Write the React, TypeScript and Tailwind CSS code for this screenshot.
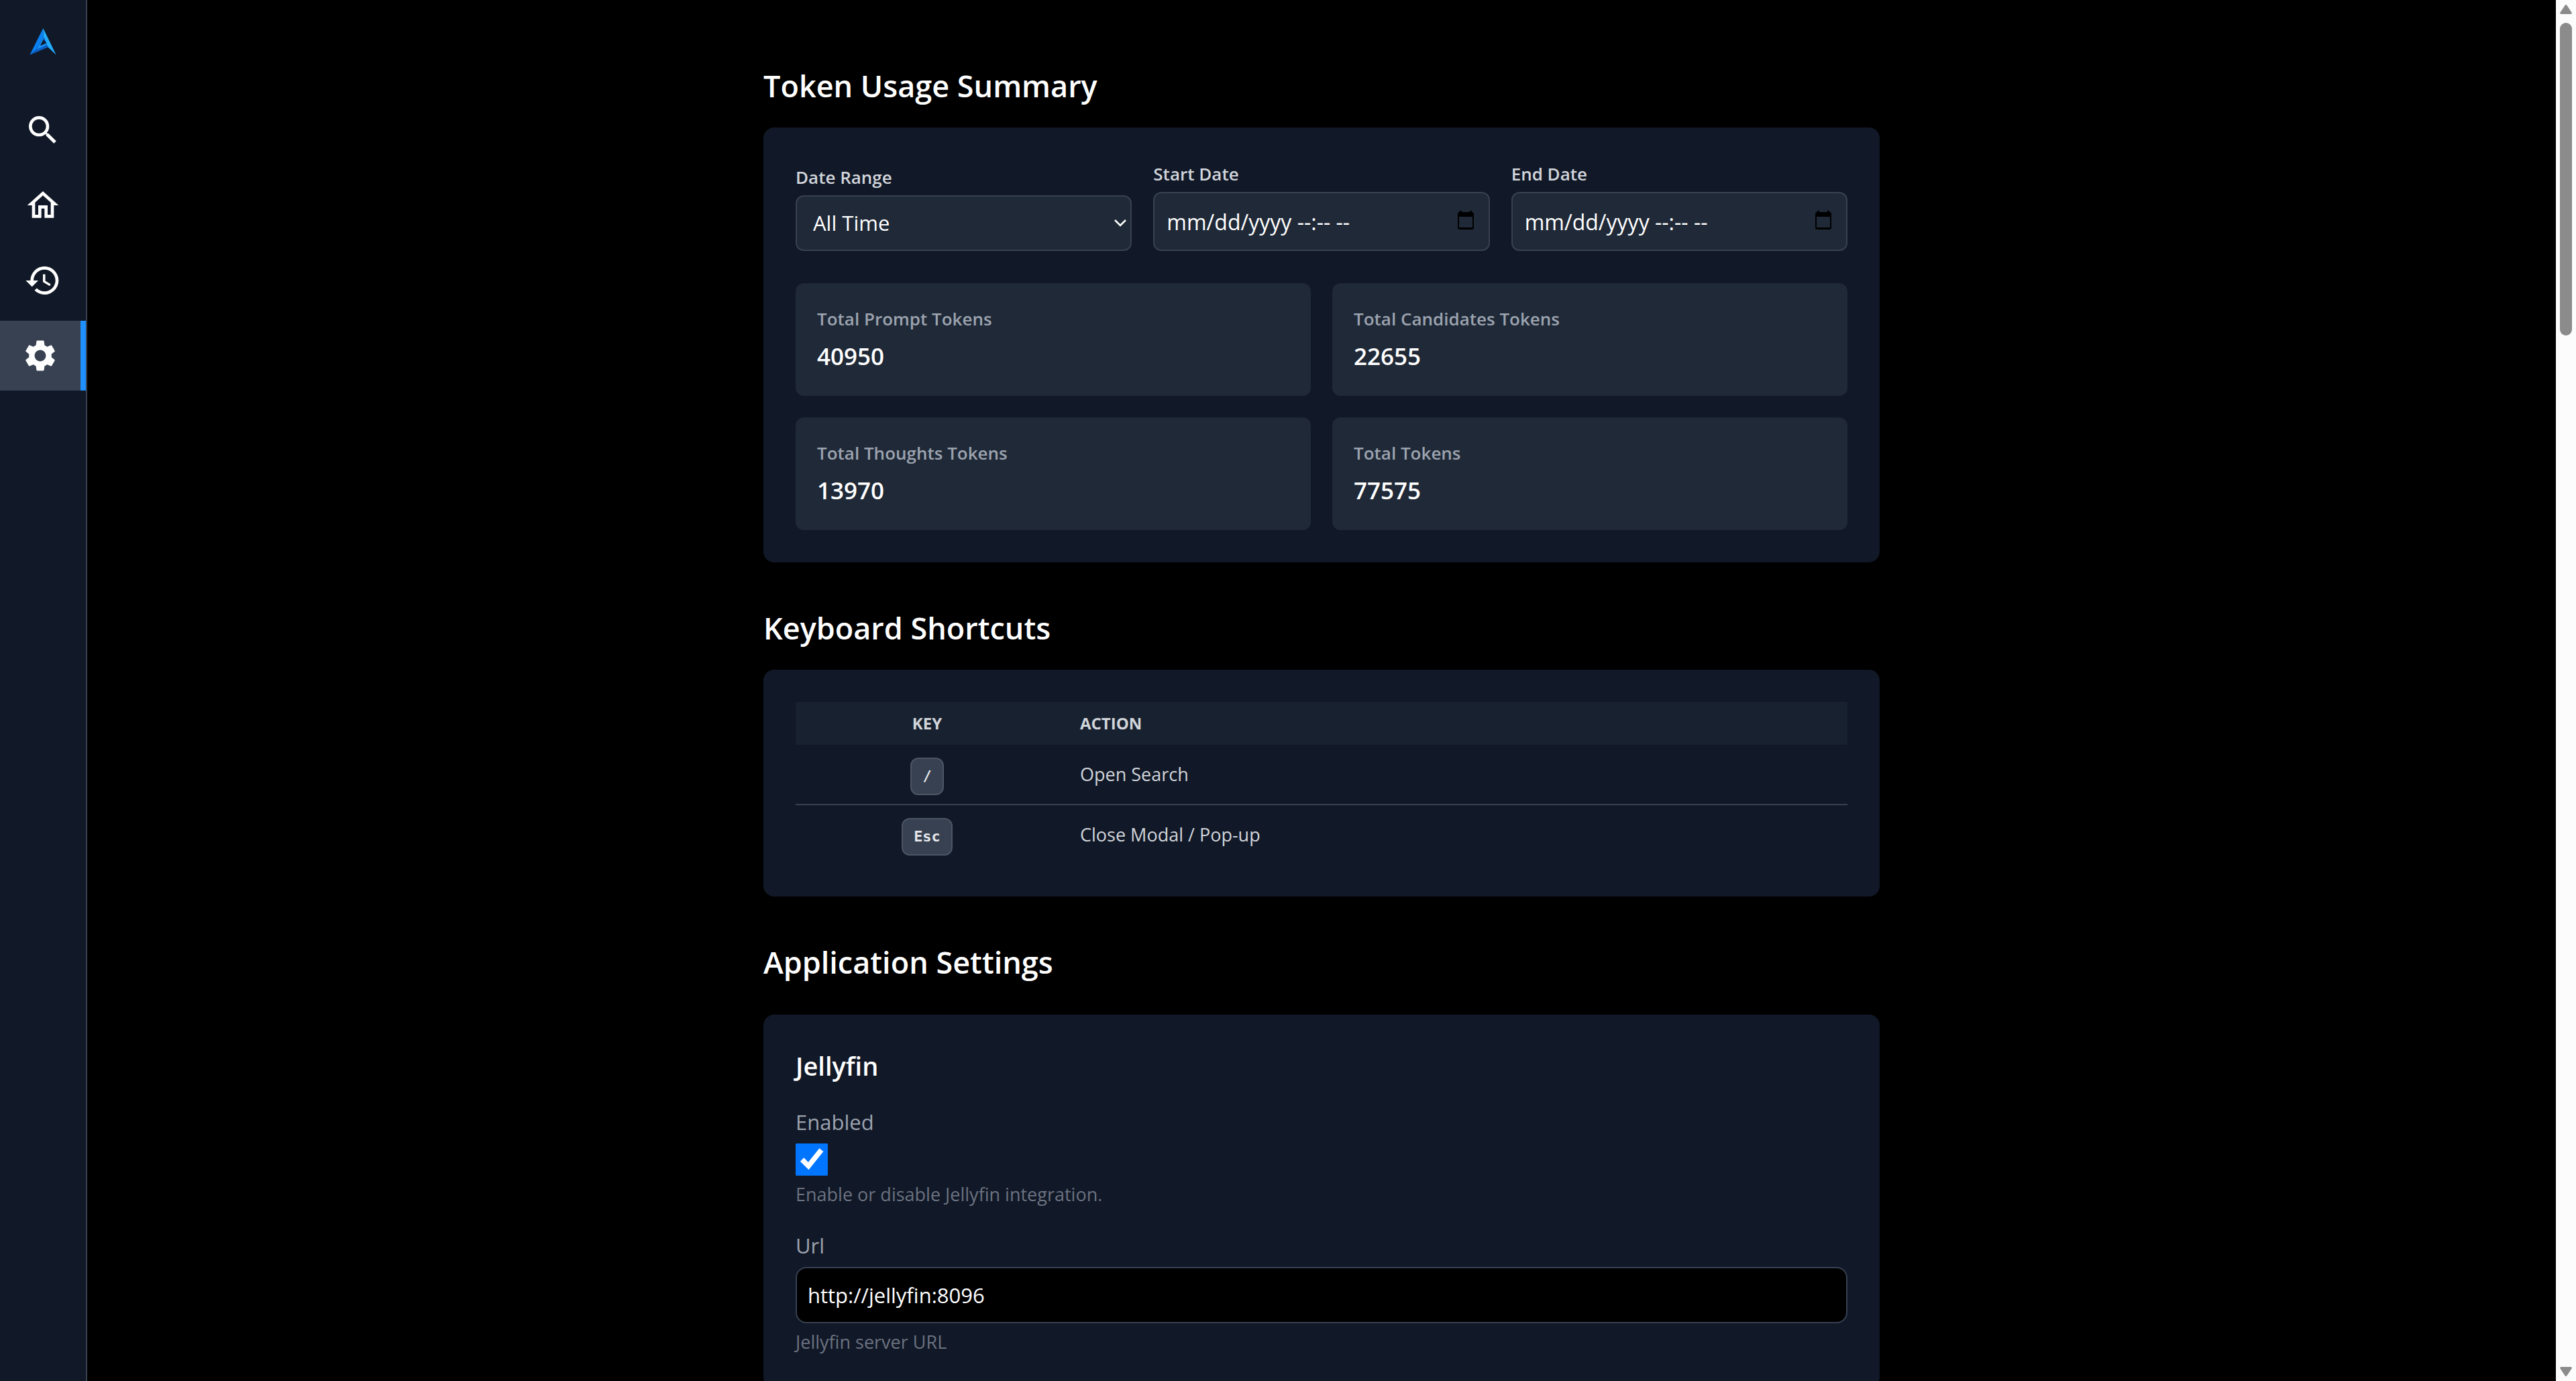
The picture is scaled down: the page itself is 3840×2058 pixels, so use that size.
import type { ReactNode } from "react";
import { MdHistory, MdOutlineHome, MdSearch, MdSettings } from "react-icons/md";

function Logo() {
  return (
    <svg viewBox="0 0 120 122" className="size-10" aria-hidden="true">
      <path d="M61 0 0 122 30 97 62 38Z" fill="#0a80f2" />
      <path d="M61 0 120 121 80 83 75 64 62 38Z" fill="#22acfc" />
      <path d="M62 38 30 98 48 92 78 76 76 68 48 79 62 51 74 66 76 62Z" fill="#1590f8" />
      <path d="M62 38 75 64 78 70 62 52Z" fill="#0757b8" />
      <path d="M0 122 30 97 80 76 84 86Z" fill="#0a5fc4" />
      <path d="M48 79 63 51 73 68Z" fill="#111827" />
    </svg>
  );
}

function NavLink({ label, active = false, children }: { label: string; active?: boolean; children: ReactNode }) {
  return (
    <a
      href="#"
      aria-label={label}
      aria-current={active ? "page" : undefined}
      className={
        active
          ? "flex h-[104px] items-center justify-center border-r-8 border-[#1e90ff] bg-[#374151]"
          : "flex h-[104px] items-center justify-center"
      }
    >
      {children}
    </a>
  );
}

function Sidebar() {
  return (
    <aside className="flex w-[130px] shrink-0 flex-col border-r-2 border-[#374151] bg-[#111827] pt-[42px] text-white">
      <a href="#" aria-label="Start page" className="mb-15 flex justify-center">
        <Logo />
      </a>
      <nav className="flex flex-col gap-2">
        <NavLink label="Search">
          <MdSearch className="size-14" />
        </NavLink>
        <NavLink label="Home">
          <MdOutlineHome className="size-14" />
        </NavLink>
        <NavLink label="History">
          <MdHistory className="size-14" />
        </NavLink>
        <NavLink label="Settings" active>
          <MdSettings className="size-14" />
        </NavLink>
      </nav>
    </aside>
  );
}

function Section({ title, wide = false, children }: { title: string; wide?: boolean; children: ReactNode }) {
  return (
    <section>
      <h2
        className={
          wide
            ? "mb-11 text-[45px] leading-[68px] font-semibold"
            : "mb-7 text-[45px] leading-[68px] font-semibold"
        }
      >
        {title}
      </h2>
      <div className="rounded-2xl bg-[#111827] p-12">{children}</div>
    </section>
  );
}

function DateField({ id, label }: { id: string; label: string }) {
  return (
    <div className="flex flex-col">
      <label htmlFor={id} className="mb-1.5 text-[26px] leading-[42px] font-semibold text-[#d1d5db]">
        {label}
      </label>
      <div className="relative">
        <input
          id={id}
          type="text"
          defaultValue="mm/dd/yyyy --:-- --"
          className="h-[88px] w-full rounded-xl border-2 border-[#374151] bg-[#1f2937] pr-20 pl-[18px] text-[32px] text-white"
        />
        <button type="button" aria-label={`Pick ${label}`} className="absolute top-6 right-5 p-1 text-black">
          <svg viewBox="0 0 24 28" className="h-7 w-6" fill="currentColor" aria-hidden="true">
            <path d="M3 0h3v2h12V0h3v2a3 3 0 0 1 3 3v20a3 3 0 0 1-3 3H3a3 3 0 0 1-3-3V5a3 3 0 0 1 3-3V0Zm-1 9v16h20V9Z" />
          </svg>
        </button>
      </div>
    </div>
  );
}

const totals = [
  { label: "Total Prompt Tokens", value: 40950 },
  { label: "Total Candidates Tokens", value: 22655 },
  { label: "Total Thoughts Tokens", value: 13970 },
  { label: "Total Tokens", value: 77575 },
];

const shortcuts = [
  { key: "/", action: "Open Search" },
  { key: "Esc", action: "Close Modal / Pop-up" },
];

function TokenUsage() {
  return (
    <Section title="Token Usage Summary">
      <div className="mb-12 grid grid-cols-3 items-end gap-8">
        <div className="flex flex-col">
          <label htmlFor="range" className="mb-1.5 text-[26px] leading-[42px] font-semibold text-[#d1d5db]">
            Date Range
          </label>
          <div className="relative">
            <select
              id="range"
              className="block h-[83px] w-full appearance-none rounded-xl border-2 border-[#374151] bg-[#1f2937] px-6 text-[31px] text-white"
            >
              <option>All Time</option>
            </select>
            <svg
              viewBox="0 0 18 11"
              className="pointer-events-none absolute top-9 right-2 h-[11px] w-[18px]"
              fill="none"
              stroke="white"
              strokeWidth="2.5"
              aria-hidden="true"
            >
              <path d="m1 1 8 8 8-8" />
            </svg>
          </div>
        </div>
        <DateField id="start" label="Start Date" />
        <DateField id="end" label="End Date" />
      </div>
      <dl className="grid grid-cols-2 gap-8">
        {totals.map((t) => (
          <div key={t.label} className="rounded-xl bg-[#1f2937] p-8">
            <dt className="text-[26px] leading-[42px] font-semibold text-[#9ca3af]">{t.label}</dt>
            <dd className="mt-2 text-[35px] leading-[54px] font-semibold">{t.value}</dd>
          </div>
        ))}
      </dl>
    </Section>
  );
}

function KeyboardShortcuts() {
  return (
    <Section title="Keyboard Shortcuts">
      <table className="w-full table-fixed text-left text-[#d1d5db]">
        <thead className="bg-[#1f2937]/50 text-[24px] leading-8 uppercase">
          <tr>
            <th scope="col" className="w-1/4 py-4 text-center font-bold">
              Key
            </th>
            <th scope="col" className="px-8 py-4 font-bold">
              Action
            </th>
          </tr>
        </thead>
        <tbody className="divide-y-2 divide-[#374151] text-[27px] leading-10">
          {shortcuts.map((s) => (
            <tr key={s.key} className="h-[89px]">
              <td className="pt-1.5 text-center align-middle">
                <kbd className="inline-block rounded-xl border-2 border-[#4b5563] bg-[#374151] px-4 py-2 align-middle font-['DejaVu_Sans_Mono',monospace] text-[22px] leading-9 font-bold text-[#e5e7eb]">
                  {s.key}
                </kbd>
              </td>
              <td className="px-8">{s.action}</td>
            </tr>
          ))}
        </tbody>
      </table>
    </Section>
  );
}

function ApplicationSettings() {
  return (
    <Section title="Application Settings" wide>
      <h3 className="mb-8 text-[38px] leading-14 font-semibold">Jellyfin</h3>
      <div className="flex flex-col gap-8">
        <div className="flex flex-col gap-2">
          <label htmlFor="enabled" className="text-[31px] leading-12 text-[#9ca3af]">
            Enabled
          </label>
          <input id="enabled" type="checkbox" defaultChecked className="size-12" />
          <p className="text-[27px] leading-10 text-[#6b7280]">Enable or disable Jellyfin integration.</p>
        </div>
        <div className="flex flex-col gap-2">
          <label htmlFor="url" className="text-[31px] leading-12 text-[#9ca3af]">
            Url
          </label>
          <input
            id="url"
            type="text"
            defaultValue="http://jellyfin:8096"
            className="h-[84px] w-full rounded-2xl border-2 border-[#374151] bg-black px-4 text-[31px] text-white"
          />
          <p className="text-[27px] leading-10 text-[#6b7280]">Jellyfin server URL</p>
        </div>
      </div>
    </Section>
  );
}

function Scrollbar() {
  return (
    <div className="flex w-[30px] shrink-0 flex-col items-center bg-[#fcfcfc] py-[7px] text-[#8b8b8b]" aria-hidden="true">
      <svg viewBox="0 0 18 14" className="h-3.5 w-[18px] shrink-0" fill="currentColor">
        <path d="M7.5 1Q9-.8 10.500 1L17.500 11.500Q18.500 14 16 14H2Q-.5 14 .5 11.500Z" />
      </svg>
      <div className="mt-[13px] h-[466px] w-[18px] rounded-full bg-[#8b8b8b]" />
      <svg viewBox="0 0 18 14" className="mt-auto h-3.5 w-[18px] shrink-0" fill="currentColor">
        <path d="M7.500 13Q9 14.800 10.500 13L17.500 2.500Q18.500 0 16 0H2Q-.5 0 .5 2.500Z" />
      </svg>
    </div>
  );
}

export default function App() {
  return (
    <div className="flex h-screen overflow-hidden bg-black font-['Open_Sans',sans-serif] text-white">
      <Sidebar />
      <main className="min-w-0 flex-1 overflow-hidden px-16">
        <div className="mx-auto flex max-w-[1664px] flex-col gap-16 pt-[94px] pb-16">
          <TokenUsage />
          <KeyboardShortcuts />
          <ApplicationSettings />
        </div>
      </main>
      <Scrollbar />
    </div>
  );
}
